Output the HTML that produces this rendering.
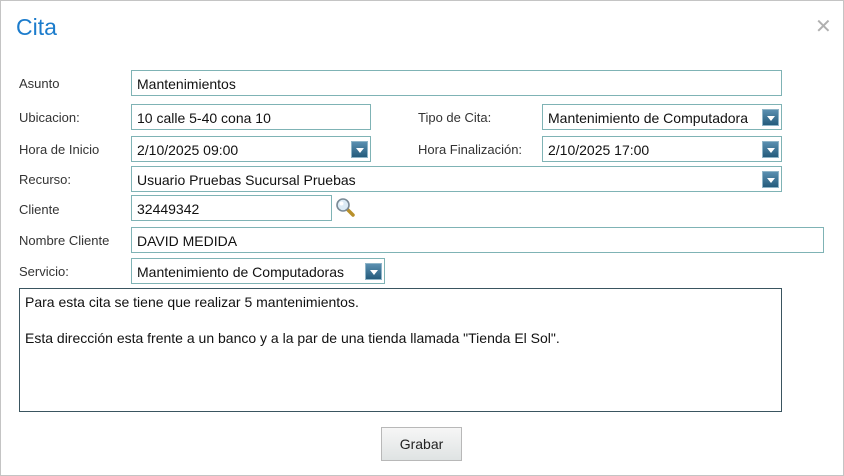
<!DOCTYPE html>
<html><head><meta charset="utf-8"><style>
*{box-sizing:border-box;margin:0;padding:0}
body{width:844px;height:476px;background:#fff;font-family:"Liberation Sans",sans-serif;position:relative;overflow:hidden}
.frame{position:absolute;left:0;top:0;width:844px;height:476px;border:1px solid #c4c4c4}
.t{position:absolute;left:16px;top:14px;font-size:23px;color:#1c7ccc}
.x{position:absolute;left:815px;top:14px;font-size:20px;color:#b0b0b0}
.l{position:absolute;left:19px;font-size:13px;color:#333}
.i{position:absolute;border:1px solid #7fb3b5;height:26px;font-size:14px;color:#111;padding:5px 0 0 5px;white-space:nowrap;overflow:hidden}
.d{position:absolute;right:2px;top:4px;width:17px;height:17px;background:linear-gradient(#5a8fb0,#245b7c);border:1px solid #8fb5c8}
.d:after{content:"";position:absolute;left:4px;top:6px;border-left:4px solid transparent;border-right:4px solid transparent;border-top:5px solid #fff}
.ta{position:absolute;left:19px;top:288px;width:763px;height:124px;border:1px solid #3a5560;font-size:14px;color:#111;padding:4px 0 0 5px;line-height:18px}
.b{position:absolute;left:381px;top:427px;width:81px;height:34px;border:1px solid #b8b8b8;background:linear-gradient(#f6f6f6,#dfe3e3);font-size:14px;text-align:center;line-height:32px;color:#222}
</style></head><body>
<div class="frame"></div>
<div class="t">Cita</div>
<div class="x">✕</div>
<div class="l" style="top:76px">Asunto</div>
<div class="i" style="left:131px;top:70px;width:651px">Mantenimientos</div>
<div class="l" style="top:110px">Ubicacion:</div>
<div class="i" style="left:131px;top:104px;width:240px">10 calle 5-40 cona 10</div>
<div class="l" style="top:110px;left:418px">Tipo de Cita:</div>
<div class="i" style="left:542px;top:104px;width:240px;padding-right:22px">Mantenimiento de Computadora<span class="d"></span></div>
<div class="l" style="top:142px">Hora de Inicio</div>
<div class="i" style="left:131px;top:136px;width:240px">2/10/2025 09:00<span class="d"></span></div>
<div class="l" style="top:142px;left:418px">Hora Finalización:</div>
<div class="i" style="left:542px;top:136px;width:240px">2/10/2025 17:00<span class="d"></span></div>
<div class="l" style="top:172px">Recurso:</div>
<div class="i" style="left:131px;top:166px;width:651px">Usuario Pruebas Sucursal Pruebas<span class="d"></span></div>
<div class="l" style="top:202px">Cliente</div>
<div class="i" style="left:131px;top:195px;width:201px">32449342</div>
<svg style="position:absolute;left:335px;top:197px" width="22" height="22" viewBox="0 0 22 22"><line x1="12" y1="12" x2="18" y2="18" stroke="#b8902a" stroke-width="3.5" stroke-linecap="round"/><circle cx="8" cy="8" r="6" fill="#dcebf5" stroke="#7a8a96" stroke-width="1.6"/><circle cx="6.5" cy="6.5" r="2" fill="#fff"/></svg>
<div class="l" style="top:233px">Nombre Cliente</div>
<div class="i" style="left:131px;top:227px;width:693px">DAVID MEDIDA</div>
<div class="l" style="top:264px">Servicio:</div>
<div class="i" style="left:131px;top:258px;width:254px">Mantenimiento de Computadoras<span class="d"></span></div>
<div class="ta">Para esta cita se tiene que realizar 5 mantenimientos.<br><br>Esta dirección esta frente a un banco y a la par de una tienda llamada "Tienda El Sol".</div>
<div class="b">Grabar</div>
</body></html>
